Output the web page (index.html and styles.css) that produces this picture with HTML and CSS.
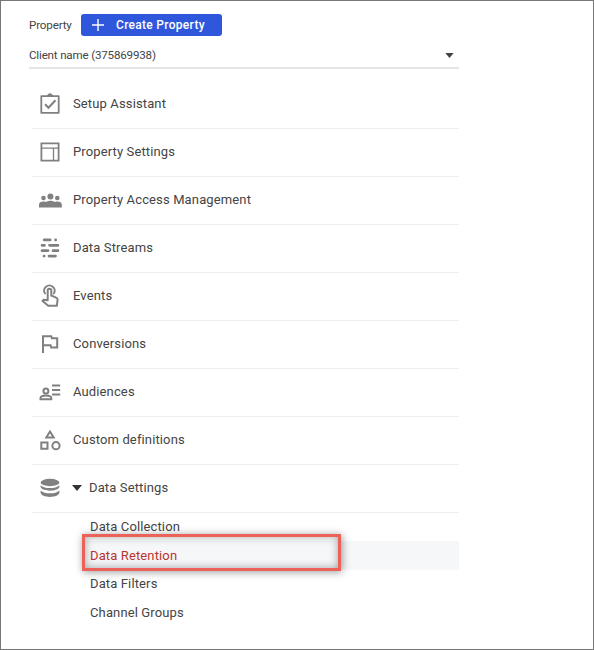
FILE: index.html
```html
<!DOCTYPE html>
<html lang="en">
<head>
<meta charset="utf-8">
<title>Property settings</title>
<link rel="stylesheet" href="styles.css">
</head>
<body>
<main class="frame">
  <header class="header">
    <span class="header-label">Property</span>
    <button class="create" type="button">
      <svg class="plus" viewBox="0 0 12 12"><path d="M6 0v12M0 6h12" stroke="currentColor" stroke-width="1.400"/></svg>
      <span>Create Property</span>
    </button>
  </header>
  <div class="selector">
    <span class="client">Client name (375869938)</span>
    <svg class="caret" viewBox="0 0 10 6"><path d="M0 0h10L5 6z"/></svg>
  </div>
  <nav class="menu">
    <a class="row"><svg class="icon" viewBox="0 0 24 24"><path fill="none" stroke="currentColor" stroke-width="1.800" stroke-linejoin="round" d="M3.300 4.100h17.400v16.700H3.300z"/><path d="M8 4.500 9.400 3a2.800 2.800 0 0 1 5.200 0L16 4.500z"/><path fill="none" stroke="currentColor" stroke-width="2" d="m7 12.200 3.500 3.500 7-7.500"/></svg><span>Setup Assistant</span></a>
    <a class="row"><svg class="icon" viewBox="0 0 24 24"><path fill="none" stroke="currentColor" stroke-width="1.800" d="M3.400 3.400h17.200v17.200H3.400z"/><path fill="none" stroke="currentColor" stroke-width="1.300" d="M3.400 8.200h17.200M15.500 8.200v12.400"/></svg><span>Property Settings</span></a>
    <a class="row"><svg class="icon" viewBox="0 0 24 24"><circle cx="5.500" cy="10" r="2.300"/><circle cx="12.400" cy="8.500" r="3"/><circle cx="19.300" cy="10" r="2.300"/><path d="M1 19.500v-3c0-2 2-3 4.500-3 1 0 1.800.1 2.500.4a10 10 0 0 1 8.800 0c.7-.3 1.500-.4 2.500-.4 2.500 0 4.500 1 4.500 3v3z"/></svg><span>Property Access Management</span></a>
    <a class="row"><svg class="icon" viewBox="0 0 24 24"><path fill="none" stroke="currentColor" stroke-width="2.700" stroke-linecap="round" d="M6.200 3.900h6M17.500 3.900h.2M4 9.300h2.500M11.500 9.300h8.500M4 14.700h6M15 14.700h5M6 20.100h.2M11 20.100h6.500"/></svg><span>Data Streams</span></a>
    <a class="row"><svg class="icon" viewBox="0 0 24 24"><path fill="none" stroke="currentColor" stroke-width="1.800" stroke-linecap="round" stroke-linejoin="round" d="M7 9.500a5.200 5.200 0 1 1 8.800 0"/><path fill="none" stroke="currentColor" stroke-width="2" stroke-linejoin="round" d="M9.700 16.200V6.600a1.800 1.800 0 0 1 3.600 0v5.200h1l4.200 2c.9.500 1.200 1 1.100 2l-.8 6H10.300L4.500 17l1.200-1.300z"/></svg><span>Events</span></a>
    <a class="row"><svg class="icon" viewBox="0 0 24 24"><path fill="none" stroke="currentColor" stroke-width="2" d="M5 21V4.200h8.300l.6 2h5.300v9.300h-6l-.6-2.200H5"/></svg><span>Conversions</span></a>
    <a class="row"><svg class="icon" viewBox="0 0 24 24"><g fill="none" stroke="currentColor" stroke-width="2"><circle cx="7.900" cy="11" r="2.500"/><path d="M2.500 19.300v-1.200c0-1.700 2.800-2.500 5.400-2.500s5.400.8 5.400 2.500v1.200z"/><path d="M14 5.600h8.200M14 10h8.200M14 14.400h8.200"/></g></svg><span>Audiences</span></a>
    <a class="row"><svg class="icon" viewBox="0 0 24 24"><g fill="none" stroke="currentColor" stroke-width="2"><path d="M12 3.600 8.300 9.600h7.400zM3.300 14.600h6.200v6.200H3.300z"/><circle cx="18" cy="17.700" r="3.600"/></g></svg><span>Custom definitions</span></a>
    <a class="row"><svg class="icon" viewBox="0 0 24 24"><ellipse cx="12" cy="6.500" rx="9.400" ry="3.700"/><path d="M2.600 9.200c2 2 5.500 2.800 9.400 2.800s7.400-.8 9.400-2.800v1.600c0 2.400-4.500 3.900-9.400 3.900s-9.400-1.500-9.400-3.900zM2.600 14.500c2 2 5.500 2.800 9.400 2.800s7.400-.8 9.400-2.800v2.100c0 2.700-4.500 4.400-9.400 4.400s-9.400-1.700-9.400-4.400z"/></svg><svg class="caret expand" viewBox="0 0 10 6"><path d="M0 0h10L5 6z"/></svg><span>Data Settings</span></a>
  </nav>
  <nav class="submenu">
    <a class="sub">Data Collection</a>
    <a class="sub active">Data Retention<span class="outline"></span></a>
    <a class="sub">Data Filters</a>
    <a class="sub">Channel Groups</a>
  </nav>
</main>
</body>
</html>
```
FILE: styles.css
```css
* { box-sizing: border-box; }
body { margin: 0; background: #fff; }
.frame {
  width: 594px;
  height: 650px;
  border: 1px solid #777;
  padding: 12px 134px 0 28px;
  font-family: Roboto, sans-serif;
  font-size: 13px;
  letter-spacing: .13px;
  color: #444;
}
.header { display: flex; align-items: center; height: 24px; }
.header-label { width: 52px; padding-bottom: 1px; font-size: 11.600px; letter-spacing: -.15px; }
.create {
  display: flex;
  align-items: center;
  gap: 12px;
  width: 141px;
  height: 22px;
  padding: 0 0 0 11px;
  border: 0;
  border-radius: 3px;
  background: #2f57dc;
  color: #fff;
  font: 500 12px Roboto, sans-serif;
  letter-spacing: .3px;
  white-space: nowrap;
}
.plus { width: 12px; height: 12px; }
.selector {
  display: flex;
  align-items: center;
  justify-content: space-between;
  height: 32px;
  padding: 6px 5px 0 0;
  border-bottom: 2px solid #e5e5e5;
  font-size: 11.600px;
  letter-spacing: -.18px;
}
.caret { width: 9px; height: 5px; fill: #444; }
.menu { margin: 12px 0 0 3px; }
.row {
  display: flex;
  align-items: center;
  height: 48px;
  padding: 0 0 2px 6px;
  border-bottom: 1px solid #eee;
}
.icon { width: 24px; height: 24px; margin-right: 11px; color: #808080; fill: currentColor; }
.expand { width: 10px; height: 6px; margin: 0 7px 0 -1px; fill: #333; }
.submenu { margin: -.5px 0 0 54px; }
.sub {
  position: relative;
  display: flex;
  align-items: center;
  height: 28.600px;
  padding-left: 7px;
}
.active { background: #f6f7f9; color: #b9352e; }
.outline {
  position: absolute;
  left: -1px;
  top: -7px;
  width: 259px;
  height: 37px;
  border: 3px solid #ed6258;
  box-shadow: 1px 1px 8px rgba(0, 0, 0, .4), inset 0 0 9px rgba(0, 0, 0, .35);
}
```
